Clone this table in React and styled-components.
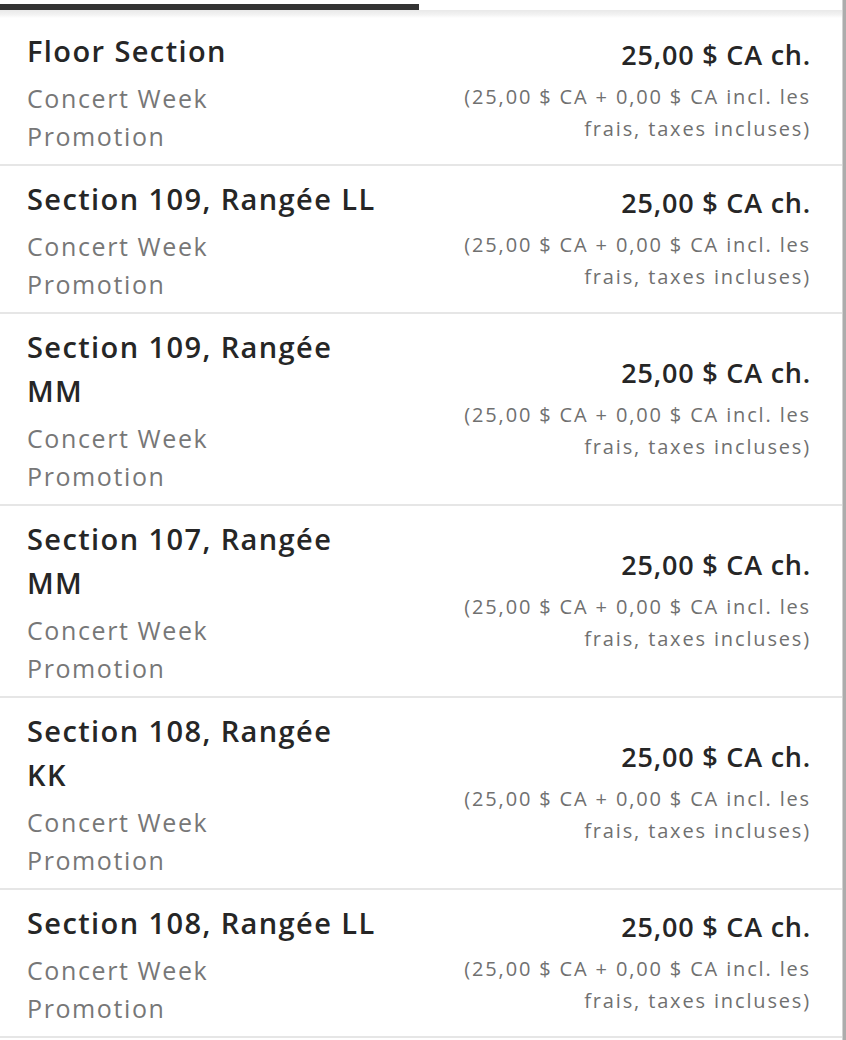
import React from 'react';
import styled, { createGlobalStyle } from 'styled-components';

const Global = createGlobalStyle`
  html, body { margin: 0; padding: 0; background: #acacac; }
  body { font-family: "Open Sans", "Noto Sans", sans-serif; -webkit-font-smoothing: antialiased; }
`;

const Panel = styled.div`
  width: 843px;
  height: 1040px;
  box-sizing: border-box;
  background: #fff;
  border-right: 1px solid #d2d2d2;
  overflow: hidden;
`;

const TabBar = styled.div`
  height: 10px;
  display: flex;
  align-items: flex-end;
  background: #fff;
`;

const TabIndicator = styled.div`
  width: 419px;
  height: 6px;
  background: #333;
`;

const TabShadow = styled.div`
  height: 8px;
  background: linear-gradient(#e9e9e9, #f3f3f3 60%, #fff);
`;

const List = styled.div`
  display: flex;
  flex-direction: column;
`;

const Row = styled.div`
  display: flex;
  justify-content: space-between;
  align-items: center;
  padding: 11px 31px 9px 27px;
  border-bottom: 2px solid #e6e6e6;
`;

const Info = styled.div`
  width: 351px;
`;

const Title = styled.div`
  font-weight: 600;
  font-size: 29px;
  line-height: 44px;
  letter-spacing: 1.4px;
  color: #262626;
`;

const Subtitle = styled.div`
  max-width: 240px;
  margin-top: 6px;
  font-size: 25px;
  line-height: 38px;
  letter-spacing: 1.6px;
  color: #777;
`;

const PriceCol = styled.div`
  width: 370px;
  padding-bottom: 3px;
  text-align: right;
`;

const Price = styled.div`
  font-weight: 600;
  font-size: 27px;
  line-height: 36px;
  letter-spacing: 0.8px;
  color: #262626;
  margin-bottom: 8px;
`;

const Fees = styled.div`
  font-size: 20px;
  line-height: 32px;
  letter-spacing: 1.85px;
  color: #707070;
`;

const tickets = [
  'Floor Section',
  'Section 109, Rangée LL',
  'Section 109, Rangée MM',
  'Section 107, Rangée MM',
  'Section 108, Rangée KK',
  'Section 108, Rangée LL',
];

export default function App() {
  return (
    <>
      <Global />
      <Panel>
        <TabBar>
          <TabIndicator />
        </TabBar>
        <TabShadow />
        <List>
          {tickets.map((t, i) => (
            <Row key={i}>
              <Info>
                <Title>{t}</Title>
                <Subtitle>Concert Week Promotion</Subtitle>
              </Info>
              <PriceCol>
                <Price>25,00 $ CA ch.</Price>
                <Fees>(25,00 $ CA + 0,00 $ CA incl. les frais, taxes incluses)</Fees>
              </PriceCol>
            </Row>
          ))}
        </List>
      </Panel>
    </>
  );
}
